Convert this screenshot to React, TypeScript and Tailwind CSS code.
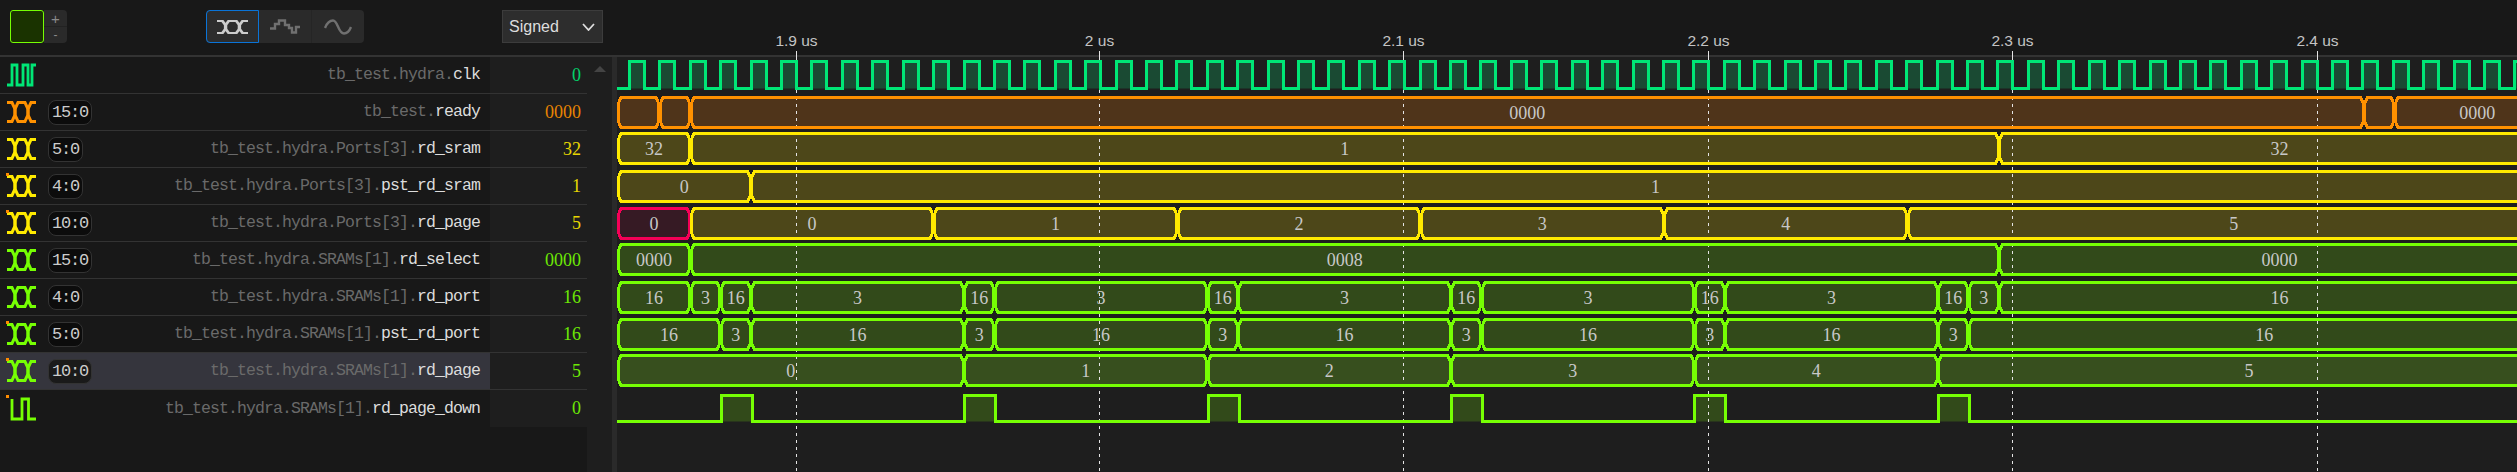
type Palette = { line: string; fill: string };
type Segment = { end: number; label?: string; palette?: Palette };
type BusTrace = { top: number; palette: Palette; segments: Segment[] };
type Signal = {
  scope: string;
  name: string;
  value: string;
  color: string;
  range?: string;
  pinned?: boolean;
  selected?: boolean;
  kind?: "bus" | "bit" | "clock";
};

const CLOCK: Palette = { line: "#00e676", fill: "#1a4a33" };
const ORANGE: Palette = { line: "#ff9100", fill: "#4f341a" };
const YELLOW: Palette = { line: "#ffea00", fill: "#4d4719" };
const GREEN: Palette = { line: "#76ff03", fill: "#324a1a" };
const GREEN_SELECTED: Palette = { line: "#76ff03", fill: "#374f1e" };
const PINK: Palette = { line: "#f50057", fill: "#361a24" };

const WAVE_START = 617.5;
const WAVE_END = 2560;
const BAR_HEIGHT = 30;

const SIGNALS: Signal[] = [
  { scope: "tb_test.hydra.", name: "clk", value: "0", color: "#00e676", kind: "clock" },
  { scope: "tb_test.", name: "ready", value: "0000", color: "#ff9100", range: "15:0" },
  { scope: "tb_test.hydra.Ports[3].", name: "rd_sram", value: "32", color: "#ffea00", range: "5:0" },
  { scope: "tb_test.hydra.Ports[3].", name: "pst_rd_sram", value: "1", color: "#ffea00", range: "4:0", pinned: true },
  { scope: "tb_test.hydra.Ports[3].", name: "rd_page", value: "5", color: "#ffea00", range: "10:0", pinned: true },
  { scope: "tb_test.hydra.SRAMs[1].", name: "rd_select", value: "0000", color: "#76ff03", range: "15:0" },
  { scope: "tb_test.hydra.SRAMs[1].", name: "rd_port", value: "16", color: "#76ff03", range: "4:0" },
  { scope: "tb_test.hydra.SRAMs[1].", name: "pst_rd_port", value: "16", color: "#76ff03", range: "5:0", pinned: true },
  { scope: "tb_test.hydra.SRAMs[1].", name: "rd_page", value: "5", color: "#76ff03", range: "10:0", pinned: true, selected: true },
  { scope: "tb_test.hydra.SRAMs[1].", name: "rd_page_down", value: "0", color: "#76ff03", pinned: true, kind: "bit" },
];

const seg = (end: number, label?: string, palette?: Palette): Segment => ({ end, label, palette });

const BUSES: BusTrace[] = [
  {
    top: 97.5,
    palette: ORANGE,
    segments: [seg(659.5), seg(690.5), seg(2364, "0000"), seg(2394.5), seg(WAVE_END, "0000")],
  },
  {
    top: 133.5,
    palette: YELLOW,
    segments: [seg(690.5, "32"), seg(1999, "1"), seg(WAVE_END, "32")],
  },
  {
    top: 171.5,
    palette: YELLOW,
    segments: [seg(751, "0"), seg(WAVE_END, "1")],
  },
  {
    top: 208.5,
    palette: YELLOW,
    segments: [
      seg(690.5, "0", PINK),
      seg(933.5, "0"),
      seg(1177.5, "1"),
      seg(1420.5, "2"),
      seg(1664, "3"),
      seg(1907.5, "4"),
      seg(WAVE_END, "5"),
    ],
  },
  {
    top: 244.5,
    palette: GREEN,
    segments: [seg(690.5, "0000"), seg(1999, "0008"), seg(WAVE_END, "0000")],
  },
  {
    top: 282.5,
    palette: GREEN,
    segments: [
      seg(690.5, "16"),
      seg(720.5, "3"),
      seg(751, "16"),
      seg(964, "3"),
      seg(994.5, "16"),
      seg(1207.5, "3"),
      seg(1238, "16"),
      seg(1451, "3"),
      seg(1481.5, "16"),
      seg(1694.5, "3"),
      seg(1725, "16"),
      seg(1938, "3"),
      seg(1968.5, "16"),
      seg(1999, "3"),
      seg(WAVE_END, "16"),
    ],
  },
  {
    top: 319.5,
    palette: GREEN,
    segments: [
      seg(720.5, "16"),
      seg(751, "3"),
      seg(964, "16"),
      seg(994.5, "3"),
      seg(1207.5, "16"),
      seg(1238, "3"),
      seg(1451, "16"),
      seg(1481.5, "3"),
      seg(1694.5, "16"),
      seg(1725, "3"),
      seg(1938, "16"),
      seg(1968.5, "3"),
      seg(WAVE_END, "16"),
    ],
  },
  {
    top: 355.5,
    palette: GREEN_SELECTED,
    segments: [
      seg(964, "0"),
      seg(1207.5, "1"),
      seg(1451, "2"),
      seg(1694.5, "3"),
      seg(1938, "4"),
      seg(WAVE_END, "5"),
    ],
  },
];

const TICKS = [
  { x: 796.5, label: "1.9 us" },
  { x: 1099.5, label: "2 us" },
  { x: 1403.5, label: "2.1 us" },
  { x: 1708.5, label: "2.2 us" },
  { x: 2012.5, label: "2.3 us" },
  { x: 2317.5, label: "2.4 us" },
];

const PULSES: [number, number][] = [
  [721, 752],
  [964, 995],
  [1208, 1239],
  [1451, 1482],
  [1694, 1725],
  [1938, 1969],
];

const clockEdges = () => {
  const edges: number[] = [];
  for (let k = 0; 629 + k * 30.41 < 2530; k++) edges.push(Math.round(629 + k * 30.41) + 0.5);
  return edges;
};

// waist of the crossing stays a hair off the transition so neighbours make a thick X
const barPoints = (start: number, end: number, top: number) => {
  const bottom = top + BAR_HEIGHT;
  return [
    `${start + 3.5},${top}`,
    `${end - 3.5},${top}`,
    `${end - 0.75},${top + 6}`,
    `${end - 0.75},${bottom - 6}`,
    `${end - 3.5},${bottom}`,
    `${start + 3.5},${bottom}`,
    `${start + 0.75},${bottom - 6}`,
    `${start + 0.75},${top + 6}`,
  ].join(" ");
};

// pairs each segment with the x it starts at
const withStarts = (segments: Segment[]) =>
  segments.map((s, i) => ({ ...s, start: i === 0 ? WAVE_START : segments[i - 1].end }));

const WaveCanvas = () => {
  const edges = clockEdges();
  const clockPath =
    `M617 88.5 H${edges[0]} ` +
    edges.map((x, i) => `V61.5 H${x + 15} V88.5 H${edges[i + 1] ?? 2530}`).join(" ");
  const pulsePath =
    "M617 421.5 " + PULSES.map(([a, b]) => `H${a}.5 V395.5 H${b}.5 V421.5`).join(" ") + " H2517";

  return (
    <svg
      className="absolute inset-0 block"
      width={1900}
      height={472}
      viewBox="617 0 1900 472"
    >
      {/* fills sit under the cursor ticks */}
      {edges.map((x) => (
        <rect key={x} x={x} y={61.5} width={15} height={27} fill={CLOCK.fill} />
      ))}
      {PULSES.map(([a, b]) => (
        <rect key={a} x={a} y={395.5} width={b - a} height={26} fill={GREEN.fill} />
      ))}
      {BUSES.map((bus) =>
        withStarts(bus.segments).map((s) => (
          <polygon
            key={`${bus.top}-${s.end}`}
            points={barPoints(s.start, s.end, bus.top)}
            fill={(s.palette ?? bus.palette).fill}
            shapeRendering="crispEdges"
          />
        )),
      )}

      {TICKS.map((tick) => (
        <g key={tick.x}>
          <line x1={tick.x} x2={tick.x} y1={51} y2={62} stroke="#e4e4e4" />
          <line
            x1={tick.x}
            x2={tick.x}
            y1={90}
            y2={472}
            stroke="#e4e4e4"
            strokeDasharray="3 4"
          />
          <text
            x={tick.x}
            y={46}
            textAnchor="middle"
            fill="#c4c4c4"
            fontSize={15.5}
            fontFamily='"Liberation Sans", Arial, sans-serif'
          >
            {tick.label}
          </text>
        </g>
      ))}

      <path d={clockPath} fill="none" stroke={CLOCK.line} strokeWidth={3} shapeRendering="crispEdges" />
      <path d={pulsePath} fill="none" stroke={GREEN.line} strokeWidth={3} shapeRendering="crispEdges" />

      {BUSES.map((bus) =>
        withStarts(bus.segments).map((s) => (
          <polygon
            key={`${bus.top}-${s.end}`}
            points={barPoints(s.start, s.end, bus.top)}
            fill="none"
            stroke={(s.palette ?? bus.palette).line}
            strokeWidth={3}
            shapeRendering="crispEdges"
          />
        )),
      )}

      {BUSES.map((bus) =>
        withStarts(bus.segments).map((s) =>
          s.label ? (
            <text
              key={`${bus.top}-${s.end}`}
              x={(s.start + s.end) / 2}
              y={bus.top + 21}
              textAnchor="middle"
              fill="#c8c8c8"
              fontSize={18}
              fontFamily='"Liberation Serif", "Times New Roman", serif'
            >
              {s.label}
            </text>
          ) : null,
        ),
      )}
    </svg>
  );
};

const BusIcon = ({ color, width = 29, height = 22 }: { color: string; width?: number; height?: number }) => (
  <svg
    width={width}
    height={height}
    viewBox="0 0 29 22"
    preserveAspectRatio="none"
    fill="none"
    stroke={color}
    strokeWidth={3}
  >
    <path d="M0 1.5 H5 L8 8 V14 L5 20.5 H0" />
    <path d="M29 1.5 H24 L21 8 V14 L24 20.5 H29" />
    <path d="M11 1.5 L8 8 V14 L11 20.5 H18 L21 14 V8 L18 1.5 Z" />
  </svg>
);

const ClockIcon = ({ color }: { color: string }) => (
  <svg width={29} height={26} viewBox="0 0 29 26" fill="none" stroke={color} strokeWidth={2.8}>
    <path d="M0 23 H5 V3 H10 V23 H16 V3 H21 V23 H25 V3 H29" />
  </svg>
);

const BitIcon = ({ color }: { color: string }) => (
  <svg width={29} height={26} viewBox="0 0 29 26" fill="none" stroke={color} strokeWidth={2.8}>
    <path d="M5 3 V23 H15 V3 H21.5 V23 H29" />
  </svg>
);

const SignalRow = ({ signal, last }: { signal: Signal; last: boolean }) => {
  const kind = signal.kind ?? "bus";

  return (
    <div className={`flex h-[37px] border-[#333333] ${last ? "" : "border-b"}`}>
      <div
        className={`relative flex w-[490px] items-center pl-[7px] pr-[10px] ${
          signal.selected ? "bg-[#35353d]" : "bg-[#181818]"
        }`}
      >
        {signal.pinned && (
          <span className="absolute left-[6px] top-[5px] h-[3px] w-[3px] bg-[#ff8c00]" />
        )}
        {kind === "bus" && <BusIcon color={signal.color} />}
        {kind === "clock" && <ClockIcon color={signal.color} />}
        {kind === "bit" && <BitIcon color={signal.color} />}
        {signal.range && (
          <span
            className={`ml-[12px] rounded-[8px] border border-[#333333] px-[3px] py-[1px] text-[17px] leading-[21px] tracking-[-1.2px] text-[#cccccc] ${
              signal.selected ? "bg-[#1a1a1a]" : "bg-[#0c0c0c]"
            }`}
          >
            {signal.range}
          </span>
        )}
        <span className="ml-auto whitespace-pre pt-[1px] text-[16.5px] tracking-[-0.9px]">
          <span className="text-[#6a6a6a]">{signal.scope}</span>
          <span className="text-[#dddddd]">{signal.name}</span>
        </span>
      </div>
      <div
        className="flex w-[97px] items-center justify-end bg-[#1f1f1f] pr-[6px] font-['Liberation_Serif',serif] text-[18px] opacity-90"
        style={{ color: signal.color }}
      >
        {signal.value}
      </div>
    </div>
  );
};

const Toolbar = () => (
  <div className="flex h-[55px] items-start bg-[#181818] pl-[10px] pt-[10px] font-['Liberation_Sans',Arial,sans-serif]">
    <div className="h-[33px] w-[34px] rounded-[3px] border border-[#76ff03] bg-[#1a3300]" />
    <div className="flex h-[33px] w-[23px] flex-col rounded-r-[4px] bg-[#2a2a2a] text-center text-[#8a8a8a]">
      <span className="h-[17px] border-b border-[#222222] text-[15px] leading-[17px]">+</span>
      <span className="text-[12px] leading-[16px]">-</span>
    </div>

    <div className="ml-[139px] flex h-[33px] w-[158px] rounded-[4px] bg-[#2a2a2a]">
      <div className="flex w-[53px] items-center justify-center rounded-l-[4px] border border-[#0a74d8] bg-[#2d2d2d]">
        <BusIcon color="#cccccc" width={31} height={14} />
      </div>
      <div className="flex w-[53px] items-center justify-center border-r border-[#252525]">
        <svg width={30} height={15} viewBox="0 0 30 15" fill="none" stroke="#707070" strokeWidth={2.4}>
          <path d="M0 9.5 H5 V5 H9 V1.5 H15 V6 H19 V9 H22 V13.5 H26 V8 H30" />
        </svg>
      </div>
      <div className="flex w-[52px] items-center justify-center">
        <svg width={28} height={16} viewBox="0 0 28 16" fill="none" stroke="#707070" strokeWidth={2.4}>
          <path d="M1 9 C3 4 6 1.5 9 1.5 C14 1.5 14 14.5 20 14.5 C23 14.5 25.5 12 27 8" />
        </svg>
      </div>
    </div>

    <div className="ml-[138px] flex h-[33px] w-[101px] items-center justify-between border border-[#3c3c3c] bg-[#2d2d2d] pl-[6px] pr-[7px] text-[16px] text-[#dddddd]">
      <span>Signed</span>
      <svg width={13} height={8} viewBox="0 0 13 8" fill="none" stroke="#dddddd" strokeWidth={1.8}>
        <path d="M1 1 L6.5 7 L12 1" />
      </svg>
    </div>
  </div>
);

const App = () => (
  <div className="flex h-[472px] w-[2517px] overflow-hidden bg-[#181818] font-['Liberation_Mono',monospace]">
    <div className="flex w-[617px] flex-col">
      <Toolbar />
      <div className="h-[2px] bg-[#333333]" />
      <div className="flex flex-1">
        <div className="w-[587px]">
          {SIGNALS.map((signal, i) => (
            <SignalRow key={signal.scope + signal.name} signal={signal} last={i === SIGNALS.length - 1} />
          ))}
        </div>
        <div className="flex w-[25px] justify-center bg-[#1e1e1e] pt-[9px]">
          <span className="h-0 w-0 border-x-[6px] border-b-[6px] border-x-transparent border-b-[#444444]" />
        </div>
        <div className="w-[5px] bg-[#2a2a2a]" />
      </div>
    </div>

    <div className="relative flex flex-1 flex-col bg-[#1e1e1e]">
      <div className="h-[57px] border-b-2 border-[#333333] bg-[#181818]" />
      <WaveCanvas />
    </div>
  </div>
);

export default App;
